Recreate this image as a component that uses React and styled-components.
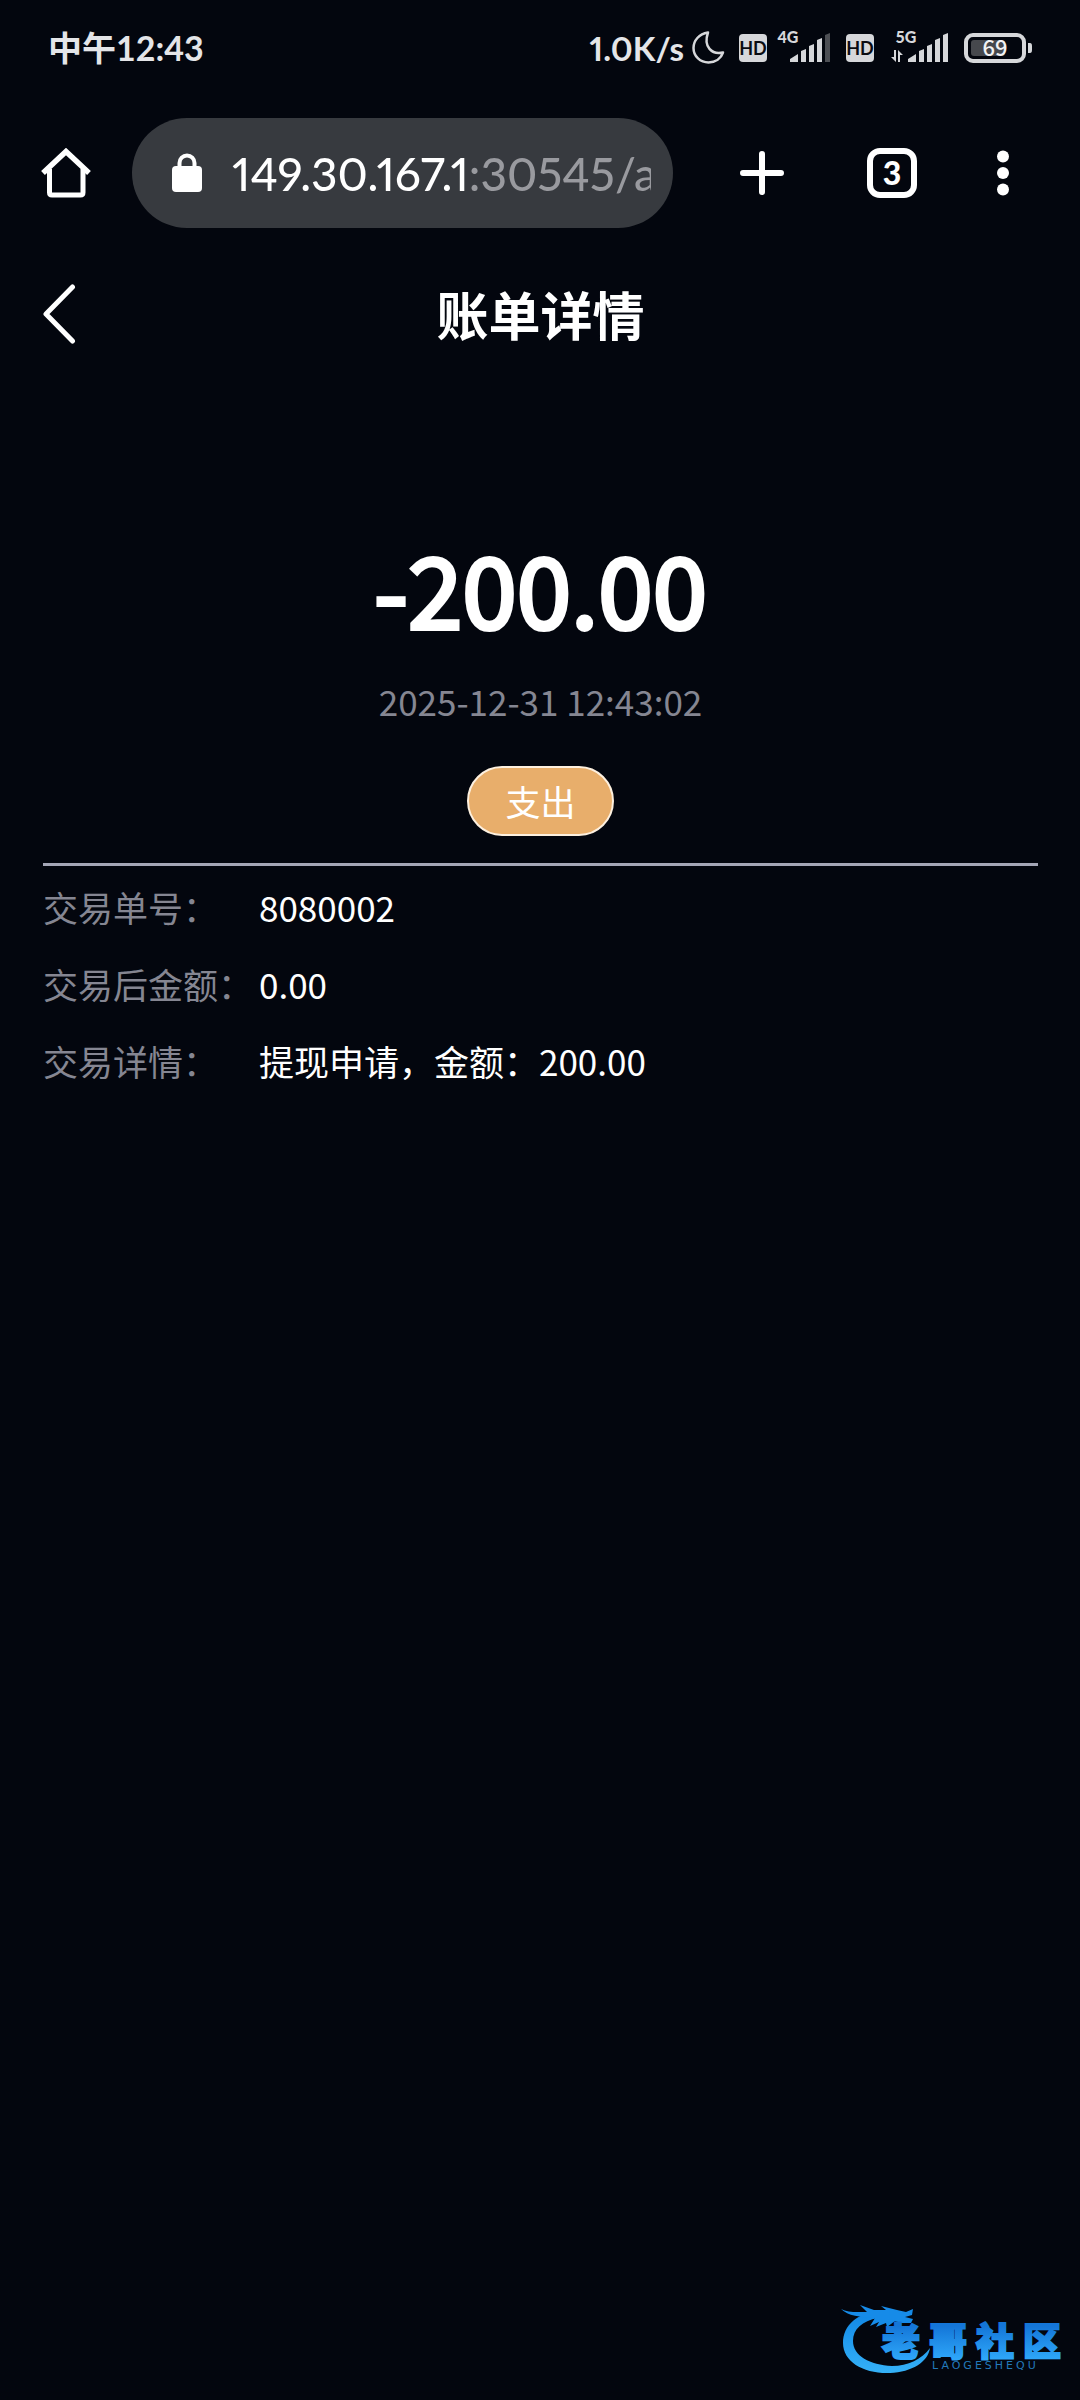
import styled, { createGlobalStyle } from 'styled-components';

const details = [
  { label: '交易单号：', value: '8080002' },
  { label: '交易后金额：', value: '0.00' },
  { label: '交易详情：', value: '提现申请，金额：200.00' },
];

const App = () => {
  return (
    <Wrapper>
      <GlobalStyle />
      <StatusBar>
        <StatusText $tabular>中午12:43</StatusText>
        <StatusIcons />
      </StatusBar>
      <Toolbar>
        <IconButton aria-label="主页">
          <HomeIcon />
        </IconButton>
        <AddressBar>
          <LockIcon />
          <AddressInput aria-label="网址" defaultValue="149.30.167.1:30545/a" />
        </AddressBar>
        <ToolbarActions>
          <IconButton aria-label="新标签页">
            <PlusIcon />
          </IconButton>
          <TabsButton aria-label="标签页">3</TabsButton>
          <IconButton $narrow aria-label="更多">
            <MoreIcon />
          </IconButton>
        </ToolbarActions>
      </Toolbar>
      <TitleBar>
        <BackButton aria-label="返回">
          <BackIcon />
        </BackButton>
        <Title>账单详情</Title>
      </TitleBar>
      <Summary>
        <Amount>-200.00</Amount>
        <Time>2025-12-31 12:43:02</Time>
        <TypeButton>支出</TypeButton>
      </Summary>
      <Details>
        {details.map(({ label, value }) => (
          <DetailRow key={label}>
            <DetailLabel>{label}</DetailLabel>
            <DetailValue>{value}</DetailValue>
          </DetailRow>
        ))}
      </Details>
      <Footer>
        <Logo />
      </Footer>
    </Wrapper>
  );
};

const StatusIcons = () => (
  <StatusRight>
    <StatusText>1.0K/s</StatusText>
    <svg width="344" height="56" viewBox="690 20 344 56" fill="#d6d7da">
      <path
        d="M708 32.500C699 34 693.500 40.500 693.500 48C693.500 56.500 700.500 62.500 708.500 62.500C715.500 62.500 721 58.500 723 52.500C712 55 703 47 708 32.500Z"
        fill="none"
        stroke="#d6d7da"
        strokeWidth="2.500"
        strokeLinejoin="round"
      />
      <rect x="739" y="34" width="28" height="28" rx="4" />
      <text x="753" y="55" fontSize="18" fontWeight="700" fill="#0a0c12" textAnchor="middle">HD</text>
      <text x="788" y="43" fontSize="16" fontWeight="900" textAnchor="middle">4G</text>
      <path d="M790 62V59L798 54V62Z M801 62V51L806 49V62Z M809 62V46L814 44V62Z M817 62V40L822 38V62Z" />
      <path d="M825 62V35L830 33V62Z" fill="#4d4f54" />
      <rect x="846" y="34" width="28" height="28" rx="4" />
      <text x="860" y="55" fontSize="18" fontWeight="700" fill="#0a0c12" textAnchor="middle">HD</text>
      <text x="906" y="43" fontSize="16" fontWeight="900" textAnchor="middle">5G</text>
      <path d="M894 50H896V62L891 57H894Z M898 62V50L903 55H900V62Z" />
      <path d="M908 62V59L916 54V62Z M919 62V51L924 49V62Z M927 62V46L932 44V62Z M935 62V40L940 38V62Z M943 62V35L948 33V62Z" />
      <rect x="966" y="35" width="58" height="26" rx="7" fill="none" stroke="#d6d7da" strokeWidth="4" />
      <rect x="971" y="40" width="34" height="16" rx="3" fill="#46484d" />
      <path d="M1028 43H1030Q1032 43 1032 46V50Q1032 53 1030 53H1028Z" />
      <BatteryText x="995" y="56" textAnchor="middle">69</BatteryText>
    </svg>
  </StatusRight>
);

const HomeIcon = () => (
  <svg width="50" height="50" viewBox="0 0 50 50" fill="none" stroke="#fff" strokeWidth="5">
    <path d="M8.500 21V44.500Q8.500 47 11 47H39.500Q42 47 42 44.500V21" />
    <path d="M2 25L25 3.500L48 25" strokeWidth="5.500" />
  </svg>
);

const LockIcon = () => (
  <svg width="30" height="40" viewBox="0 0 30 40">
    <path d="M7.500 16V10A7.500 7.500 0 0 1 22.500 10V16" fill="none" stroke="#fff" strokeWidth="4" />
    <rect y="13" width="30" height="26" rx="4" fill="#fff" />
  </svg>
);

const PlusIcon = () => (
  <svg width="44" height="44" viewBox="0 0 44 44" stroke="#fff" strokeWidth="6" strokeLinecap="round">
    <path d="M22 3V41M3 22H41" />
  </svg>
);

const MoreIcon = () => (
  <svg width="12" height="46" viewBox="0 0 12 46" fill="#fff">
    <circle cx="6" cy="6.500" r="6" />
    <circle cx="6" cy="23" r="6" />
    <circle cx="6" cy="39.500" r="6" />
  </svg>
);

const BackIcon = () => (
  <svg width="34" height="60" viewBox="0 0 34 60" fill="none">
    <path d="M29.500 3L3 30L29.500 57" stroke="#fff" strokeWidth="5" strokeLinecap="round" strokeLinejoin="round" />
  </svg>
);

const Logo = () => (
  <svg width="224" height="76" viewBox="0 0 224 76" role="img" aria-label="老哥社区">
    <defs>
      <linearGradient id="ring" x1="0" y1="0" x2="0" y2="1">
        <stop offset="0" stopColor="#1187e6" />
        <stop offset="1" stopColor="#35b1f7" />
      </linearGradient>
      <linearGradient id="word" gradientUnits="userSpaceOnUse" x1="0" y1="26" x2="0" y2="60">
        <stop offset="0" stopColor="#1476d8" />
        <stop offset="1" stopColor="#2fa8fa" />
      </linearGradient>
    </defs>
    <path
      fill="url(#ring)"
      d="M40 12C18 12 3 25 3 43C3 62 24 74 50 73C72 72 88 62 90 48C82 59 68 66 52 66C30 65 13 56 13 41C13 29 22 21 38 18Z"
    />
    <path
      fill="#168be8"
      d="M1 9C8 13 18 12 27 12L20 5L34 10L46 10L41 6L57 10L66 12L73 9L72 15L65 17L73 19L71 23L61 23L55 21L47 27L46 23L36 27L39 22L30 26L35 18C20 17 8 16 1 9Z"
    />
    <text
      x="42 89 136 183"
      y="55"
      fontSize="38"
      fontWeight="900"
      fill="url(#word)"
      stroke="url(#word)"
      strokeWidth="2"
    >
      老哥社区
    </text>
    <LogoCaption x="92" y="69">LAOGESHEQU</LogoCaption>
  </svg>
);

const GlobalStyle = createGlobalStyle`
  body {
    margin: 0;
    background: #03060e;
  }

  * {
    box-sizing: border-box;
  }

  svg {
    display: block;
    flex-shrink: 0;
  }

  button {
    border: none;
    padding: 0;
    background: none;
    color: inherit;
    font-family: inherit;
    cursor: pointer;
  }
`;

const Wrapper = styled.div`
  min-height: 100vh;
  display: flex;
  flex-direction: column;
  background: #03060e;
  color: #fff;
  font-family: 'Noto Sans CJK SC', sans-serif;
  font-size: 35px;
`;

const StatusBar = styled.div`
  height: 96px;
  padding: 0 46px 0 48px;
  display: flex;
  align-items: center;
  justify-content: space-between;
`;

const StatusRight = styled.div`
  display: flex;
  align-items: center;
  gap: 6px;
  font-family: Lato, sans-serif;
`;

const StatusText = styled.span`
  color: #e4e5e8;
  font-family: Lato, 'Noto Sans CJK SC', sans-serif;
  font-size: ${({ $tabular }) => ($tabular ? '34px' : '33px')};
  font-weight: 700;
  line-height: 40px;
  font-variant-numeric: ${({ $tabular }) => ($tabular ? 'tabular-nums' : 'proportional-nums')};
`;

const BatteryText = styled.text`
  fill: #f2f2f4;
  font-family: 'Noto Sans CJK SC', sans-serif;
  font-size: 22px;
  font-weight: 500;
`;

const Toolbar = styled.div`
  height: 154px;
  padding: 0 71px 0 41px;
  display: flex;
  align-items: center;
`;

const IconButton = styled.button`
  width: ${({ $narrow }) => ($narrow ? '12px' : '50px')};
  height: 50px;
  display: flex;
  align-items: center;
  justify-content: center;
`;

const AddressBar = styled.div`
  flex: 1;
  min-width: 0;
  height: 110px;
  margin: 0 64px 0 41px;
  padding: 0 22px 0 40px;
  display: flex;
  align-items: center;
  gap: 30px;
  border-radius: 55px;
  background: #373a3f;
`;

/* host is white, port and path are dimmed */
const AddressInput = styled.input`
  flex: 1;
  min-width: 0;
  height: 64px;
  border: none;
  padding: 0;
  outline: none;
  color: transparent;
  background: linear-gradient(90deg, #fff 235px, #999a9f 235px);
  background-clip: text;
  -webkit-background-clip: text;
  font-family: Lato, sans-serif;
  font-size: 46px;
  font-weight: 500;
  font-variant-numeric: proportional-nums;
`;

const ToolbarActions = styled.div`
  display: flex;
  align-items: center;
  gap: 80px;
`;

const TabsButton = styled.button`
  width: 50px;
  height: 50px;
  && {
    border: 6px solid #fff;
    font-family: Lato, sans-serif;
  }
  border-radius: 13px;
  font-size: 32px;
  font-weight: 900;
  line-height: 38px;
`;

const TitleBar = styled.header`
  height: 128px;
  padding: 0 42px 0 43px;
  display: grid;
  grid-template-columns: 1fr auto 1fr;
  align-items: center;
`;

const BackButton = styled.button`
  justify-self: start;
`;

const Title = styled.h1`
  margin: 0;
  font-size: 52px;
  font-weight: 700;
  line-height: 76px;
`;

const Summary = styled.section`
  margin: 0 42px 0 43px;
  padding: 136px 0 27px;
  display: flex;
  flex-direction: column;
  align-items: center;
  border-bottom: 3px solid #a4a6b6;
`;

const Amount = styled.div`
  font-size: 98px;
  line-height: 144px;
  -webkit-text-stroke: 4px #fff;
`;

const Time = styled.time`
  margin-top: 17px;
  color: #858692;
  line-height: 52px;
`;

const TypeButton = styled.button`
  && {
    padding: 0 36px;
    border: 2px solid #fdf0df;
    background: #e8ae6b;
  }
  height: 70px;
  margin-top: 39px;
  border-radius: 35px;
  font-size: 35px;
  line-height: 66px;
`;

const Details = styled.dl`
  margin: 2px 42px 0 43px;
`;

const DetailRow = styled.div`
  display: flex;
  line-height: 77px;
`;

const DetailLabel = styled.dt`
  width: 216px;
  flex-shrink: 0;
  color: #858692;
  white-space: nowrap;
`;

const DetailValue = styled.dd`
  margin: 0;
`;

const Footer = styled.footer`
  margin-top: auto;
  padding: 0 16px 24px;
  display: flex;
  justify-content: flex-end;
`;

const LogoCaption = styled.text`
  fill: #2279bb;
  font-family: 'DejaVu Sans', sans-serif;
  font-size: 11px;
  letter-spacing: 3px;
`;

export default App;
